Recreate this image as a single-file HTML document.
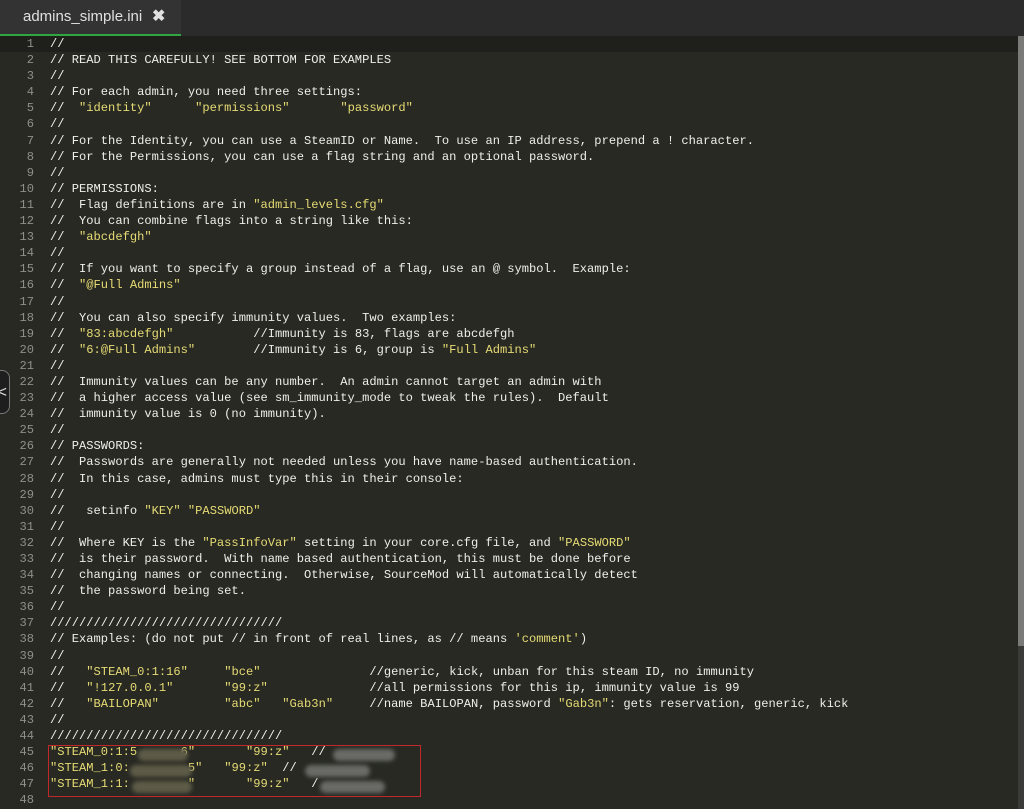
<!DOCTYPE html>
<html><head><meta charset="utf-8"><style>
body{margin:0;width:1024px;height:809px;overflow:hidden;background:#282923;font-family:"Liberation Sans",sans-serif;position:relative}
#bar{position:absolute;left:0;top:0;width:1024px;height:36px;background:#2b2b2b}
#tab{position:absolute;left:0;top:0;width:181px;height:34px;background:#333333;border-bottom:2px solid #2fa640;color:#e0e0e0;font-size:15px;line-height:34px}
#tab span{position:absolute;left:23px;top:0}
#tab b{position:absolute;left:152px;top:0;font-size:16px}
#hl{position:absolute;left:0;top:36px;width:1018px;height:16px;background:#1f1f1c}
#code{position:absolute;left:0;top:36px;font-family:"Liberation Mono",monospace;font-size:12.1px;line-height:16.1px;color:#efefe8;white-space:pre}
.ln{display:inline-block;width:34px;text-align:right;color:#8f908a;margin-right:16px}
.s{color:#e6db74}
#sb{position:absolute;left:1018px;top:36px;width:6px;height:773px;background:#3a3a38}
#th{position:absolute;left:1018px;top:36px;width:6px;height:610px;background:#7a7a78}
#arr{position:absolute;left:-10px;top:370px;width:20px;height:44px;border:1px solid #777;border-radius:8px;background:#1e1e1e;color:#ddd;font-size:16px;line-height:44px;text-align:right;padding-right:2px;box-sizing:border-box}
#box{position:absolute;left:48px;top:745px;width:373px;height:52px;border:1px solid #c0282b;box-sizing:border-box}
.bl{position:absolute;height:12px;border-radius:6px;filter:blur(2px)}
</style></head><body>
<div id="bar"></div>
<div id="tab"><span>admins_simple.ini</span><b>✖</b></div>
<div id="hl"></div>
<div id="code"><span class="ln">1</span>//
<span class="ln">2</span>// READ THIS CAREFULLY! SEE BOTTOM FOR EXAMPLES
<span class="ln">3</span>//
<span class="ln">4</span>// For each admin, you need three settings:
<span class="ln">5</span>//  <span class="s">"identity"</span>      <span class="s">"permissions"</span>       <span class="s">"password"</span>
<span class="ln">6</span>//
<span class="ln">7</span>// For the Identity, you can use a SteamID or Name.  To use an IP address, prepend a ! character.
<span class="ln">8</span>// For the Permissions, you can use a flag string and an optional password.
<span class="ln">9</span>//
<span class="ln">10</span>// PERMISSIONS:
<span class="ln">11</span>//  Flag definitions are in <span class="s">"admin_levels.cfg"</span>
<span class="ln">12</span>//  You can combine flags into a string like this:
<span class="ln">13</span>//  <span class="s">"abcdefgh"</span>
<span class="ln">14</span>//
<span class="ln">15</span>//  If you want to specify a group instead of a flag, use an @ symbol.  Example:
<span class="ln">16</span>//  <span class="s">"@Full Admins"</span>
<span class="ln">17</span>//
<span class="ln">18</span>//  You can also specify immunity values.  Two examples:
<span class="ln">19</span>//  <span class="s">"83:abcdefgh"</span>           //Immunity is 83, flags are abcdefgh
<span class="ln">20</span>//  <span class="s">"6:@Full Admins"</span>        //Immunity is 6, group is <span class="s">"Full Admins"</span>
<span class="ln">21</span>//
<span class="ln">22</span>//  Immunity values can be any number.  An admin cannot target an admin with
<span class="ln">23</span>//  a higher access value (see sm_immunity_mode to tweak the rules).  Default
<span class="ln">24</span>//  immunity value is 0 (no immunity).
<span class="ln">25</span>//
<span class="ln">26</span>// PASSWORDS:
<span class="ln">27</span>//  Passwords are generally not needed unless you have name-based authentication.
<span class="ln">28</span>//  In this case, admins must type this in their console:
<span class="ln">29</span>//
<span class="ln">30</span>//   setinfo <span class="s">"KEY"</span> <span class="s">"PASSWORD"</span>
<span class="ln">31</span>//
<span class="ln">32</span>//  Where KEY is the <span class="s">"PassInfoVar"</span> setting in your core.cfg file, and <span class="s">"PASSWORD"</span>
<span class="ln">33</span>//  is their password.  With name based authentication, this must be done before
<span class="ln">34</span>//  changing names or connecting.  Otherwise, SourceMod will automatically detect
<span class="ln">35</span>//  the password being set.
<span class="ln">36</span>//
<span class="ln">37</span>////////////////////////////////
<span class="ln">38</span>// Examples: (do not put // in front of real lines, as // means <span class="s">'comment'</span>)
<span class="ln">39</span>//
<span class="ln">40</span>//   <span class="s">"STEAM_0:1:16"</span>     <span class="s">"bce"</span>               //generic, kick, unban for this steam ID, no immunity
<span class="ln">41</span>//   <span class="s">"!127.0.0.1"</span>       <span class="s">"99:z"</span>              //all permissions for this ip, immunity value is 99
<span class="ln">42</span>//   <span class="s">"BAILOPAN"</span>         <span class="s">"abc"</span>   <span class="s">"Gab3n"</span>     //name BAILOPAN, password <span class="s">"Gab3n"</span>: gets reservation, generic, kick
<span class="ln">43</span>//
<span class="ln">44</span>////////////////////////////////
<span class="ln">45</span><span class="s">"STEAM_0:1:5      6"</span>       <span class="s">"99:z"</span>   //
<span class="ln">46</span><span class="s">"STEAM_1:0:        5"</span>   <span class="s">"99:z"</span>  //
<span class="ln">47</span><span class="s">"STEAM_1:1:        "</span>       <span class="s">"99:z"</span>   /
<span class="ln">48</span></div>
<div class="bl" style="left:138px;top:749px;width:50px;background:#5e5c48"></div>
<div class="bl" style="left:333px;top:749px;width:62px;background:#6a6a66"></div>
<div class="bl" style="left:130px;top:765px;width:62px;background:#5e5c48"></div>
<div class="bl" style="left:305px;top:765px;width:65px;background:#6a6a66"></div>
<div class="bl" style="left:132px;top:781px;width:60px;background:#5e5c48"></div>
<div class="bl" style="left:320px;top:781px;width:65px;background:#6a6a66"></div>
<div id="box"></div>
<div id="sb"></div><div id="th"></div>
<div id="arr">&lt;</div>
</body></html>
